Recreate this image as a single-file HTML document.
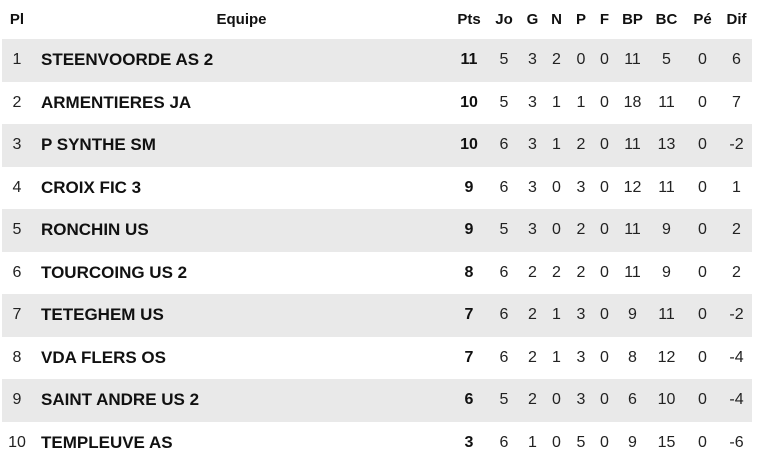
<!DOCTYPE html>
<html><head><style>
body{margin:0;background:#fff;font-family:"Liberation Sans",Arial,sans-serif;color:#222;}
table{border-collapse:collapse;position:absolute;left:2px;top:0;width:750px;table-layout:fixed;}
td,th{padding:0;text-align:center;font-size:16px;white-space:nowrap;}
th{height:39px;font-size:15px;font-weight:bold;color:#111;}
td{height:42.5px;}
tr.g td{background:#e9e9e9;}
td.t{text-align:left;font-weight:bold;color:#111;padding-left:9px;font-size:17px;}
td.p{font-weight:bold;color:#111;}
</style></head><body>
<table>
<colgroup><col style="width:30px"><col style="width:419px"><col style="width:36px"><col style="width:34px"><col style="width:23px"><col style="width:25px"><col style="width:24px"><col style="width:23px"><col style="width:33px"><col style="width:35px"><col style="width:37px"><col style="width:31px"></colgroup>
<tr><th>Pl</th><th>Equipe</th><th>Pts</th><th>Jo</th><th>G</th><th>N</th><th>P</th><th>F</th><th>BP</th><th>BC</th><th>Pé</th><th>Dif</th></tr>
<tr class="g"><td>1</td><td class="t">STEENVOORDE AS 2</td><td class="p">11</td><td>5</td><td>3</td><td>2</td><td>0</td><td>0</td><td>11</td><td>5</td><td>0</td><td>6</td></tr>
<tr><td>2</td><td class="t">ARMENTIERES JA</td><td class="p">10</td><td>5</td><td>3</td><td>1</td><td>1</td><td>0</td><td>18</td><td>11</td><td>0</td><td>7</td></tr>
<tr class="g"><td>3</td><td class="t">P SYNTHE SM</td><td class="p">10</td><td>6</td><td>3</td><td>1</td><td>2</td><td>0</td><td>11</td><td>13</td><td>0</td><td>-2</td></tr>
<tr><td>4</td><td class="t">CROIX FIC 3</td><td class="p">9</td><td>6</td><td>3</td><td>0</td><td>3</td><td>0</td><td>12</td><td>11</td><td>0</td><td>1</td></tr>
<tr class="g"><td>5</td><td class="t">RONCHIN US</td><td class="p">9</td><td>5</td><td>3</td><td>0</td><td>2</td><td>0</td><td>11</td><td>9</td><td>0</td><td>2</td></tr>
<tr><td>6</td><td class="t">TOURCOING US 2</td><td class="p">8</td><td>6</td><td>2</td><td>2</td><td>2</td><td>0</td><td>11</td><td>9</td><td>0</td><td>2</td></tr>
<tr class="g"><td>7</td><td class="t">TETEGHEM US</td><td class="p">7</td><td>6</td><td>2</td><td>1</td><td>3</td><td>0</td><td>9</td><td>11</td><td>0</td><td>-2</td></tr>
<tr><td>8</td><td class="t">VDA FLERS OS</td><td class="p">7</td><td>6</td><td>2</td><td>1</td><td>3</td><td>0</td><td>8</td><td>12</td><td>0</td><td>-4</td></tr>
<tr class="g"><td>9</td><td class="t">SAINT ANDRE US 2</td><td class="p">6</td><td>5</td><td>2</td><td>0</td><td>3</td><td>0</td><td>6</td><td>10</td><td>0</td><td>-4</td></tr>
<tr><td>10</td><td class="t">TEMPLEUVE AS</td><td class="p">3</td><td>6</td><td>1</td><td>0</td><td>5</td><td>0</td><td>9</td><td>15</td><td>0</td><td>-6</td></tr>
</table>
</body></html>
